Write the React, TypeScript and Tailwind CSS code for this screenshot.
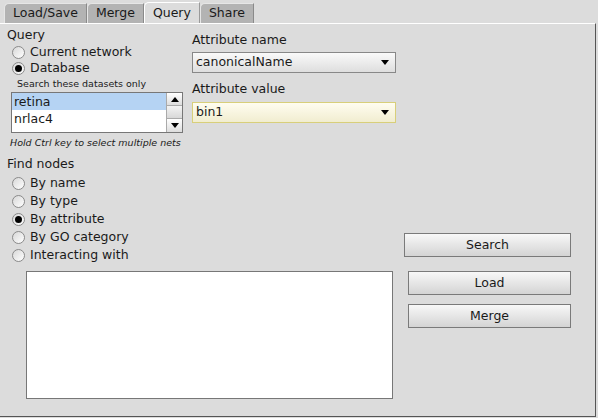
import React from "react";

const FONT = { fontFamily: '"DejaVu Sans", Verdana, sans-serif' };

const TABS = ["Load/Save", "Merge", "Query", "Share"];

function Radio({ label, checked }: { label: string; checked?: boolean }) {
  return (
    <div className="flex items-center h-[18px] text-[12.5px] text-[#1a1a1a]">
      <span className="ml-[5px] mr-[5px] w-[13px] h-[13px] rounded-full border border-[#8a8a8a] bg-gradient-to-br from-[#d8d8d8] to-white flex items-center justify-center">
        {checked && <span className="w-[7px] h-[7px] rounded-full bg-black" />}
      </span>
      {label}
    </div>
  );
}

function Dropdown({ value, highlight }: { value: string; highlight?: boolean }) {
  return (
    <div
      className={`flex items-center w-[204px] h-[21px] border pl-[3px] pr-[6px] text-[12.5px] text-[#1a1a1a] ${
        highlight
          ? "border-[#d8cf7a] bg-gradient-to-b from-[#fffdf0] to-[#f1edd0]"
          : "border-[#888] bg-gradient-to-b from-[#fafafa] to-[#dedede]"
      }`}
    >
      <span className="flex-1">{value}</span>
      <svg width="8" height="5" viewBox="0 0 8 5">
        <path d="M0 0 L8 0 L4 5 Z" fill="#000" />
      </svg>
    </div>
  );
}

function Button({ label, className }: { label: string; className: string }) {
  return (
    <div
      className={`flex items-center justify-center h-[24px] border border-[#7a7a7a] bg-gradient-to-b from-[#f8f8f8] to-[#d4d4d4] text-[12.5px] text-[#1a1a1a] ${className}`}
    >
      {label}
    </div>
  );
}

export default function App() {
  return (
    <div className="w-[598px] h-[418px] bg-[#dcdcdc] flex flex-col overflow-hidden" style={FONT}>
      <div className="flex items-end h-[23px] pl-[4px] shrink-0">
        {TABS.map((t) => {
          const active = t === "Query";
          return (
            <div
              key={t}
              className={`px-[8px] flex items-center text-[12.5px] text-[#1a1a1a] rounded-tl-[5px] border-t border-l ${
                active
                  ? "bg-[#dcdcdc] border-white border-r border-r-[#9a9a9a] h-[21px]"
                  : "h-[20px] bg-[#b3b3b3] border-[#e6e6e6] border-r border-r-[#8a8a8a]"
              }`}
            >
              {t}
            </div>
          );
        })}
      </div>
      <div className="flex-1 flex flex-col border-t border-white border-r border-r-[#555] border-b border-b-[#555] mr-[2px] mb-[1px]">
        <div className="flex h-[241px]">
          <div className="w-[192px] pl-[7px] pt-[3px] flex flex-col">
            <div className="text-[12.5px] text-[#1a1a1a] leading-[16px]">Query</div>
            <Radio label="Current network" />
            <div className="-mt-[2px]">
              <Radio label="Database" checked />
            </div>
            <div className="pl-[10px] text-[9.5px] text-[#1a1a1a] leading-[12px] mt-[1px]">Search these datasets only</div>
            <div className="ml-[4px] mt-[2px] w-[172px] h-[41px] border border-[#777] bg-white flex overflow-hidden">
              <div className="flex-1 text-[12.5px] text-[#1a1a1a] leading-[17px]">
                <div className="bg-[#b5d3f3] pl-[2px]">retina</div>
                <div className="pl-[2px]">nrlac4</div>
              </div>
              <div className="w-[16px] flex flex-col border-l border-[#aaa] bg-[#eee]">
                <div className="h-[13px] flex items-center justify-center border-b border-[#aaa] bg-gradient-to-b from-white to-[#ddd]">
                  <svg width="8" height="5" viewBox="0 0 8 5"><path d="M0 5 L8 5 L4 0 Z" fill="#000" /></svg>
                </div>
                <div className="h-[13px] border-b border-[#aaa] bg-gradient-to-b from-[#f4f4f4] to-[#d8d8d8]" />
                <div className="flex-1 flex items-center justify-center bg-gradient-to-b from-white to-[#ddd]">
                  <svg width="8" height="5" viewBox="0 0 8 5"><path d="M0 0 L8 0 L4 5 Z" fill="#000" /></svg>
                </div>
              </div>
            </div>
            <div className="pl-[3px] mt-[4px] text-[9.5px] italic text-[#1a1a1a] leading-[12px]">
              Hold Ctrl key to select multiple nets
            </div>
            <div className="mt-[7px] text-[12.5px] text-[#1a1a1a] leading-[16px]">Find nodes</div>
            <div className="mt-[2px]">
              <Radio label="By name" />
              <Radio label="By type" />
              <Radio label="By attribute" checked />
              <Radio label="By GO category" />
              <Radio label="Interacting with" />
            </div>
          </div>
          <div className="w-[212px] pt-[8px] flex flex-col">
            <div className="text-[12.5px] text-[#1a1a1a] leading-[16px] mb-[4px]">Attribute name</div>
            <Dropdown value="canonicalName" />
            <div className="text-[12.5px] text-[#1a1a1a] leading-[16px] mt-[8px] mb-[5px]">Attribute value</div>
            <Dropdown value="bin1" highlight />
          </div>
          <div className="flex-1 flex flex-col justify-end pb-[8px]">
            <Button label="Search" className="w-[167px]" />
          </div>
        </div>
        <div className="flex mt-[6px]">
          <div className="ml-[26px] w-[367px] h-[128px] border border-[#777] bg-white" />
          <div className="ml-[15px] flex flex-col gap-[9px]">
            <Button label="Load" className="w-[163px]" />
            <Button label="Merge" className="w-[163px]" />
          </div>
        </div>
      </div>
    </div>
  );
}
